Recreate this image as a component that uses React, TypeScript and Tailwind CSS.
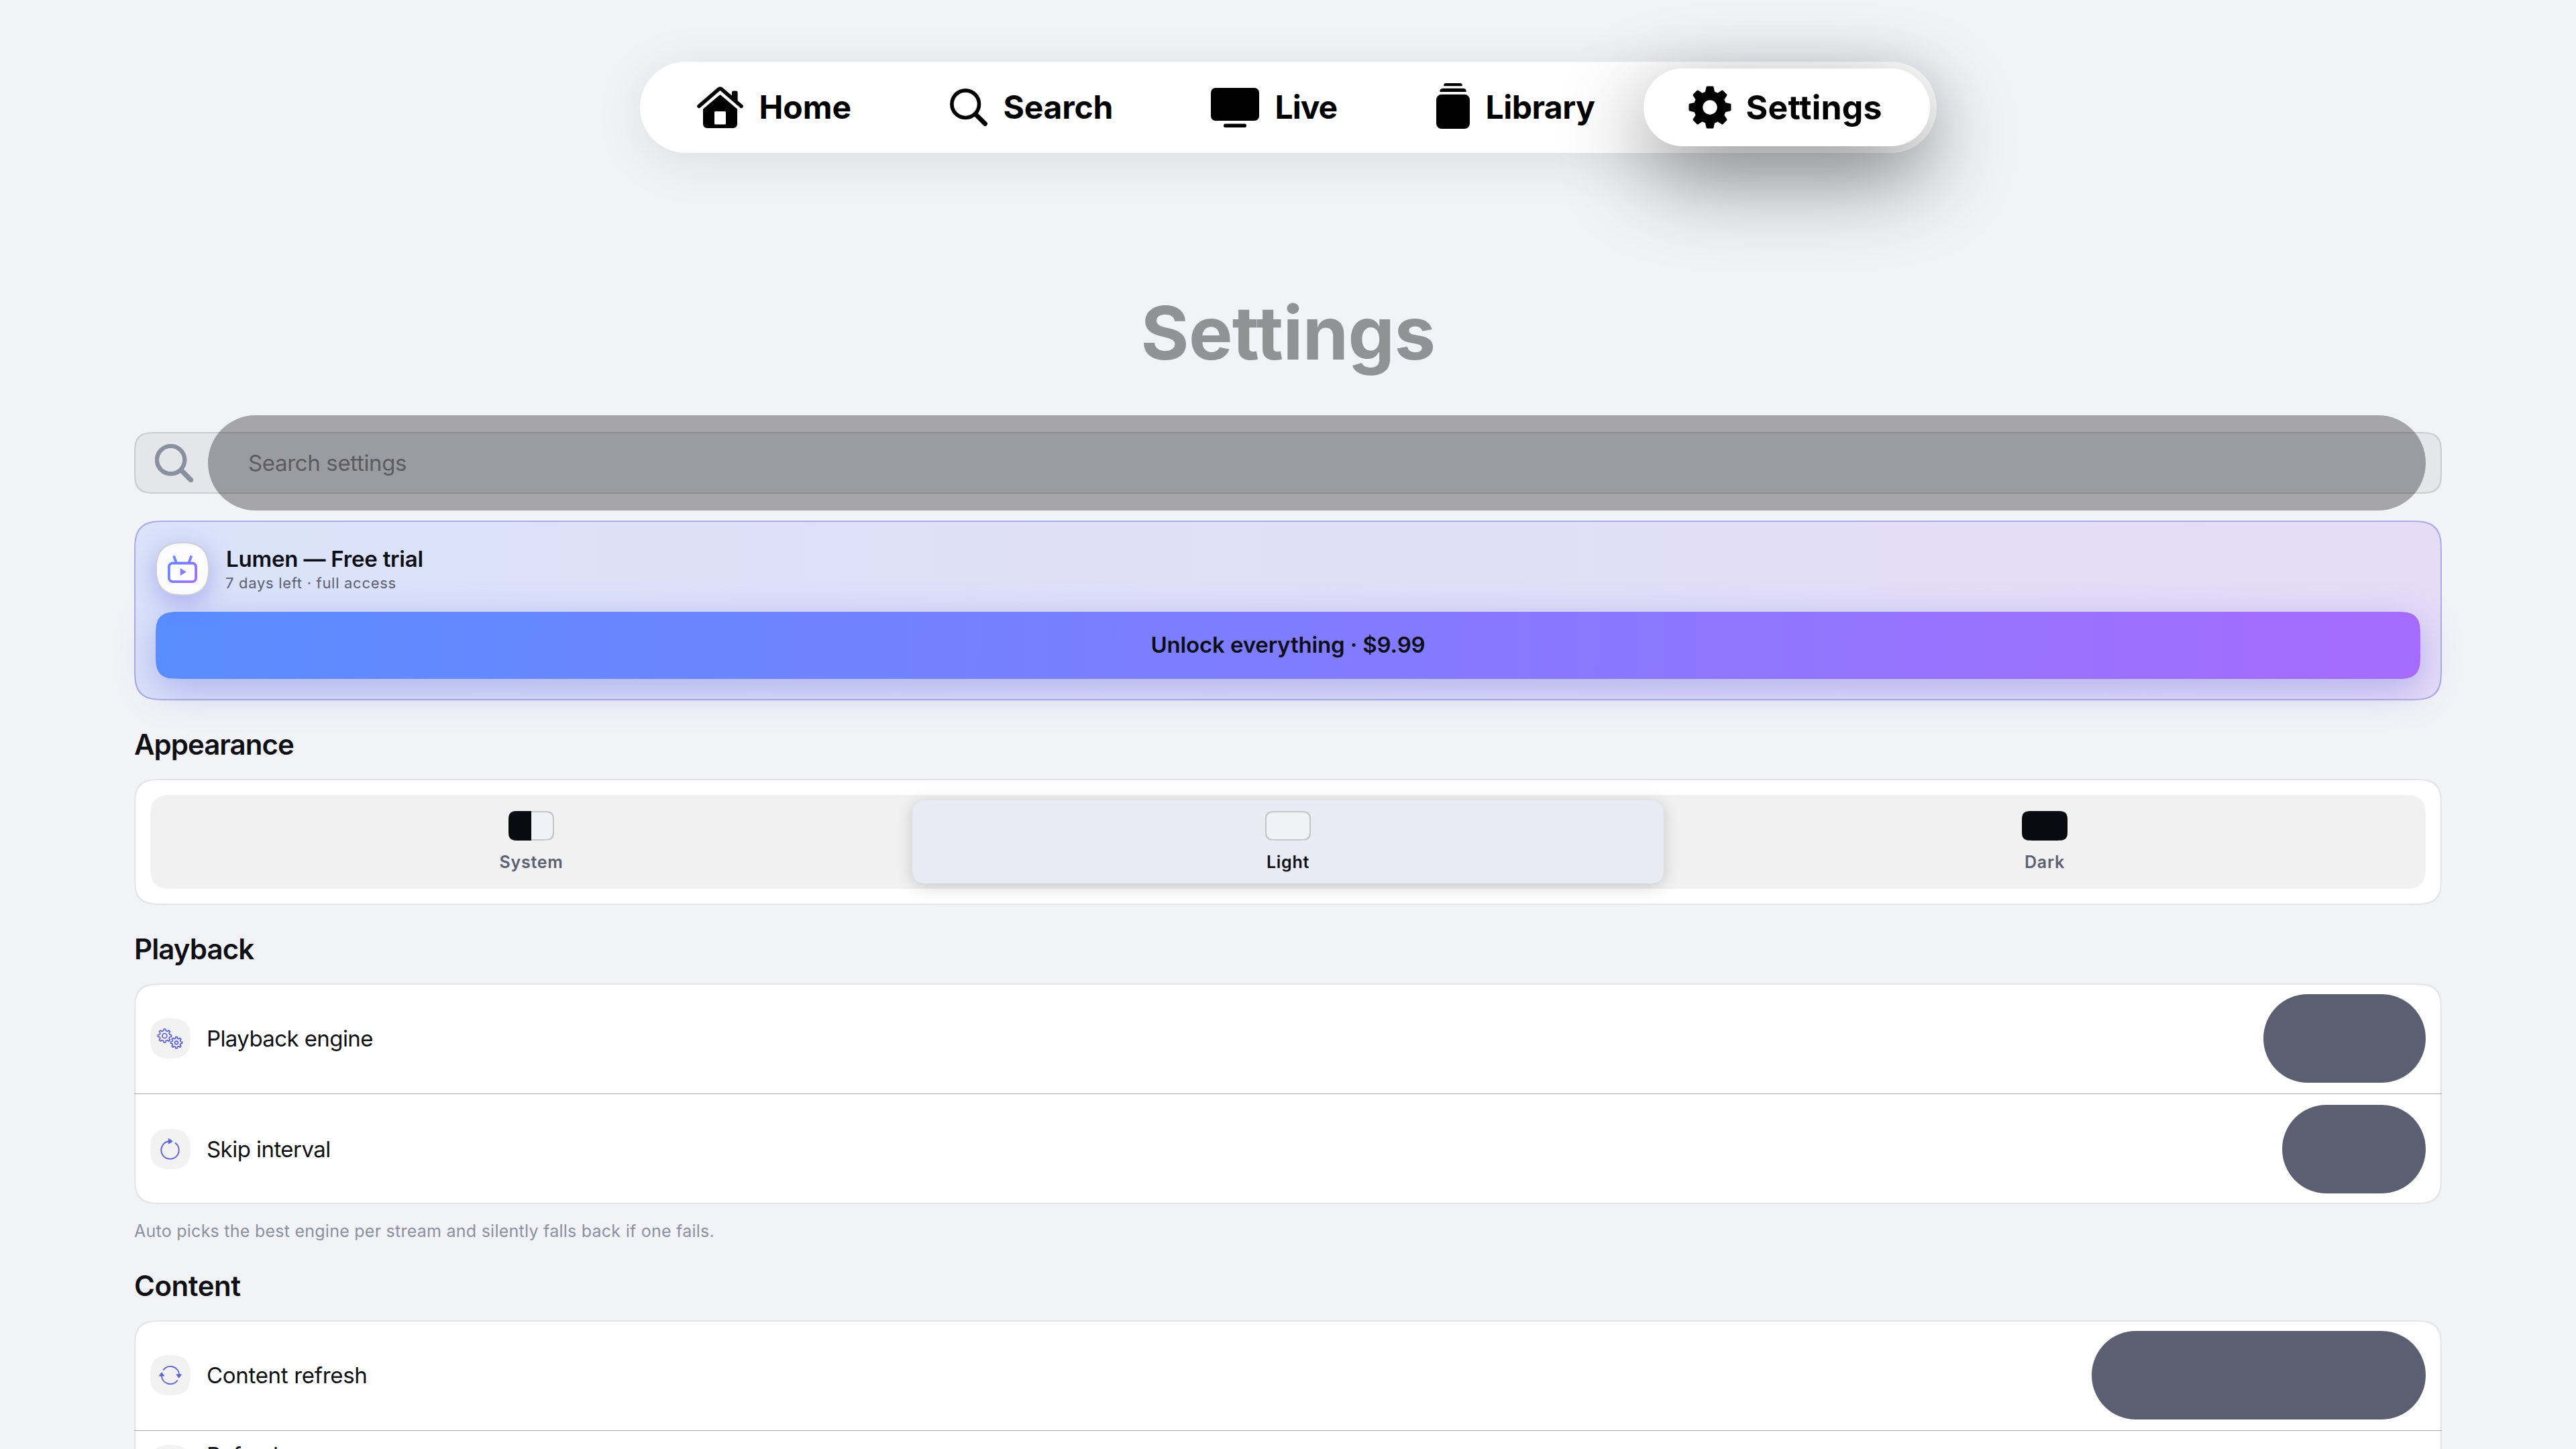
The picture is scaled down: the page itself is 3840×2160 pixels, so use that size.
import type { ReactNode } from "react";

type NavItem = {
  label: string;
  icon: ReactNode;
  width: string;
  text: string;
};

const ACCENT = "#5c62d6";

function polar(cx: number, cy: number, r: number, deg: number) {
  const a = (deg * Math.PI) / 180;
  return `${(cx + r * Math.sin(a)).toFixed(2)} ${(cy - r * Math.cos(a)).toFixed(2)}`;
}

// Closed outline of a cog with flat-topped teeth
function cogPath(cx: number, cy: number, outer: number, inner: number, teeth: number) {
  const step = 360 / teeth;
  const points: string[] = [];
  for (let i = 0; i < teeth; i++) {
    const a = i * step;
    points.push(
      polar(cx, cy, inner, a - step * 0.29),
      polar(cx, cy, outer, a - step * 0.18),
      polar(cx, cy, outer, a + step * 0.18),
      polar(cx, cy, inner, a + step * 0.29)
    );
  }
  return `M${points.join("L")}Z`;
}

function HomeIcon() {
  return (
    <svg width="69" height="62" viewBox="0 0 69 62" className="shrink-0">
      <path d="M3 29.3 32.2 4.2a3.6 3.6 0 0 1 4.6 0L66 29.3" fill="none" stroke="#000" strokeWidth="5.6" strokeLinecap="round" />
      <path d="M52 8.5a2 2 0 0 1 2-2h4.6a2 2 0 0 1 2 2V24L52 17Z" />
      <path
        fillRule="evenodd"
        d="M33.2 13a2 2 0 0 1 2.6 0L60 33.5V56a6 6 0 0 1-6 6H15a6 6 0 0 1-6-6V33.5ZM27.5 37a1.5 1.5 0 0 0-1.5 1.5V55a1.5 1.5 0 0 0 1.5 1.5h14A1.5 1.5 0 0 0 43 55V38.5a1.5 1.5 0 0 0-1.5-1.5Z"
      />
    </svg>
  );
}

function SearchIcon({ size, color, stroke }: { size: number; color: string; stroke: number }) {
  return (
    <svg width={size} height={size} viewBox="0 0 56 56" fill="none" stroke={color} strokeLinecap="round" className="shrink-0">
      <circle cx="23.2" cy="23.2" r="20.3" strokeWidth={stroke} />
      <path d="M39.5 39.5 52.5 52.5" strokeWidth={stroke + 1.2} />
    </svg>
  );
}

function LiveIcon() {
  return (
    <svg width="72" height="59" viewBox="0 0 72 59" className="shrink-0">
      <rect width="72" height="49" rx="7" />
      <rect x="19" y="53.5" width="34" height="5.5" rx="2.5" />
    </svg>
  );
}

function LibraryIcon() {
  return (
    <svg width="50" height="68" viewBox="0 0 50 68" className="mb-1 shrink-0">
      <path d="M14.5 0h21a3 3 0 0 1 3 4.3h-27a3 3 0 0 1 3-4.3Z" />
      <path d="M9.5 7.8h31a4 4 0 0 1 4 5.2h-39a4 4 0 0 1 4-5.2Z" />
      <rect y="16.8" width="50" height="51.2" rx="8" />
    </svg>
  );
}

function GearIcon() {
  return (
    <svg width="64" height="64" viewBox="0 0 64 64" className="shrink-0">
      <circle cx="32" cy="32" r="17.5" fill="none" stroke="#000" strokeWidth="13.5" />
      {[0, 45, 90, 135, 180, 225, 270, 315].map((deg) => (
        <path
          key={deg}
          d="M28.2 2.2h7.6L38 12h-12Z"
          stroke="#000"
          strokeWidth="3.4"
          strokeLinejoin="round"
          transform={`rotate(${deg} 32 32)`}
        />
      ))}
    </svg>
  );
}

function TvIcon() {
  return (
    <svg width="44" height="41" viewBox="0 0 44 41" fill="none">
      <defs>
        <linearGradient id="tv" x1="0" y1="0" x2="44" y2="41" gradientUnits="userSpaceOnUse">
          <stop stopColor="#5b8dff" />
          <stop offset="1" stopColor="#a56bff" />
        </linearGradient>
      </defs>
      <g stroke="url(#tv)" strokeWidth="3.8" strokeLinecap="round">
        <rect x="1.9" y="11.5" width="40.2" height="27.6" rx="5.5" />
        <path d="M9.5 2 12.8 11M34.8 2 31.5 11" />
      </g>
      <path d="M18.7 20v9.2a.6.6 0 0 0 .9.5l7.3-4.6a.6.6 0 0 0 0-1l-7.3-4.6a.6.6 0 0 0-.9.5Z" fill="url(#tv)" />
    </svg>
  );
}

function EngineIcon() {
  return (
    <svg width="60" height="60" viewBox="0 0 60 60" fill="none" stroke={ACCENT} strokeWidth="1.7" strokeLinejoin="round">
      <path d={cogPath(21.4, 26, 10.1, 7.7, 8)} />
      <circle cx="21.4" cy="26" r="3.5" />
      <path d={cogPath(39, 36.2, 8.6, 6.5, 8)} />
      <circle cx="39" cy="36.2" r="2.4" />
    </svg>
  );
}

function SkipIcon() {
  return (
    <svg width="60" height="60" viewBox="0 0 60 60" fill="none" stroke={ACCENT} strokeWidth="1.9" strokeLinecap="round">
      <path d="M28 18.3A13.2 13.2 0 1 0 37.5 20.9" />
      <path d="M27.3 14.8v7.2L33 18.6Z" fill={ACCENT} strokeWidth="1" strokeLinejoin="round" />
    </svg>
  );
}

function RefreshIcon() {
  return (
    <svg width="60" height="60" viewBox="0 0 60 60" fill="none" stroke={ACCENT} strokeWidth="1.9" strokeLinecap="round">
      <path d="M19.7 21.8A13.2 13.2 0 0 1 43.2 29.5M40.3 38.2A13.2 13.2 0 0 1 16.8 30.5" />
      <path d="M39.3 28.9h7l-3.5 4.9ZM13.7 31.1h7l-3.5-4.9Z" fill={ACCENT} strokeWidth="1" strokeLinejoin="round" />
    </svg>
  );
}

const NAV: NavItem[] = [
  { label: "Home", icon: <HomeIcon />, width: "w-[377px]", text: "" },
  { label: "Search", icon: <SearchIcon size={56} color="#000" stroke={5.6} />, width: "w-[389px]", text: "tracking-[-0.2px]" },
  { label: "Live", icon: <LiveIcon />, width: "w-[336px]", text: "tracking-[-1px]" },
  { label: "Library", icon: <LibraryIcon />, width: "w-[309px]", text: "tracking-[-0.5px]" }
];

function NavBar() {
  return (
    <nav className="mx-auto mt-[92px] flex h-[136px] w-[1933px] shrink-0 items-center rounded-full bg-white pl-[85px] text-[48px] font-bold text-black shadow-[0_12px_80px_rgba(0,0,0,0.09)]">
      {NAV.map((item) => (
        <div key={item.label} className={`flex shrink-0 items-center gap-6 ${item.width}`}>
          {item.icon}
          <span className={item.text}>{item.label}</span>
        </div>
      ))}
      <div className="flex h-[116px] w-[427px] shrink-0 items-center gap-[22px] rounded-full bg-white pl-[67px] shadow-[0_44px_130px_rgba(0,0,0,0.47)]">
        <GearIcon />
        <span className="text-[50px] tracking-[0.2px]">Settings</span>
      </div>
    </nav>
  );
}

function SearchBar() {
  return (
    <div className="mt-[88px] flex h-[92px] items-center justify-between rounded-[34px] border-2 border-[#cccccf] bg-[#e5e6ea] pr-[22px] pl-[29px] [corner-shape:superellipse(1.7)]">
      <SearchIcon size={57} color="#8b90a0" stroke={6.2} />
      <div className="flex h-[142px] w-[3306px] shrink-0 items-center rounded-full bg-[#1e1e23]/37 pt-px pl-[60px] text-[33px] tracking-[-0.35px] text-[#5b5c5f]">
        Search settings
      </div>
    </div>
  );
}

function TrialCard() {
  return (
    <section className="mt-10 h-[268px] rounded-[49px] border-2 border-[#aaabe7] bg-linear-to-r from-[#dae3f9] to-[#e6dcf7] bg-origin-border px-[30px] pt-[30px] [corner-shape:superellipse(1.7)]">
      <div className="flex items-center gap-6">
        <div className="flex size-20 items-center justify-center rounded-[40px] border-2 border-[#cfcfd5] bg-[#fcfcff] shadow-[0_10px_36px_rgba(92,98,225,0.4)] [corner-shape:superellipse(1.35)]">
          <TvIcon />
        </div>
        <div className="flex flex-col gap-0.5">
          <h2 className="pl-px text-[33px] leading-[40px] font-semibold tracking-[-0.2px] text-[#0d0f18]">Lumen — Free trial</h2>
          <p className="text-[22px] leading-[28px] tracking-[0.7px] text-[#5b5f71]">7 days left · full access</p>
        </div>
      </div>
      <button className="mt-6 flex h-[100px] w-full items-center justify-center rounded-[37px] bg-linear-[92deg] from-[#598dff] to-[#a66bff] text-[33px] font-semibold tracking-[-0.15px] text-[#0d0f18] shadow-[0_16px_56px_rgba(92,98,225,0.36)] [corner-shape:superellipse(1.7)]">
        Unlock everything · $9.99
      </button>
    </section>
  );
}

function SectionTitle({ children, className }: { children: ReactNode; className: string }) {
  return <h2 className={`mt-9 mb-[21px] text-[42px] leading-[60px] font-semibold text-[#0f1015] ${className}`}>{children}</h2>;
}

function Card({ children, className = "" }: { children: ReactNode; className?: string }) {
  return (
    <section className={`rounded-[42px] bg-white shadow-[inset_0_0_0_2px_#e5e5e7] [corner-shape:superellipse(1.7)] ${className}`}>
      {children}
    </section>
  );
}

function Swatch({ mode }: { mode: "system" | "light" | "dark" }) {
  if (mode === "dark") {
    return <div className="h-11 w-[68px] rounded-[15px] bg-[#090b10] [corner-shape:superellipse(1.7)]" />;
  }
  return (
    <div className="h-11 w-[68px] overflow-hidden rounded-[15px] bg-[#f1f2f6] shadow-[inset_0_0_0_2px_#c5c5ca] [corner-shape:superellipse(1.7)]">
      {mode === "system" && <div className="h-full w-1/2 bg-[#090b10]" />}
    </div>
  );
}

function Segment({ label, mode, active = false }: { label: string; mode: "system" | "light" | "dark"; active?: boolean }) {
  return (
    <div
      className={`flex flex-1 flex-col items-center gap-4 rounded-[26px] pt-4 [corner-shape:superellipse(1.7)] ${
        active ? "bg-[#e8ebf4] text-[#0f1015] shadow-[0_4px_24px_rgba(0,0,0,0.18)]" : "text-[#5b5f71]"
      }`}
    >
      <Swatch mode={mode} />
      <span className="text-[25px] leading-8 font-semibold tracking-[0.7px]">{label}</span>
    </div>
  );
}

function Row({ icon, label, text, pill }: { icon: ReactNode; label: string; text: string; pill: string }) {
  return (
    <div className="flex h-[164px] items-center px-6">
      <div className="size-[60px] rounded-[30px] bg-[#f2f2f3] [corner-shape:superellipse(1.4)]">{icon}</div>
      <span className={`ml-6 pt-px text-[33px] text-[#0f1015] ${text}`}>{label}</span>
      <div className={`ml-auto h-[132px] rounded-full bg-[#5b5f71] ${pill}`} />
    </div>
  );
}

function Divider() {
  return <div className="h-px bg-[#a9a9ab]" />;
}

export default function App() {
  return (
    <div className="flex h-[2160px] w-[3840px] flex-col overflow-hidden bg-[#f2f3f7] font-[Inter,sans-serif]">
      <NavBar />
      <main className="mx-auto w-[3440px]">
        <h1 className="mt-[208px] text-center text-[110px] leading-[120px] font-bold tracking-[-0.57px] text-[#919294]">Settings</h1>
        <SearchBar />
        <TrialCard />

        <SectionTitle className="tracking-[-1px]">Appearance</SectionTitle>
        <Card className="p-6">
          <div className="flex h-[140px] gap-2 rounded-[37px] bg-[#f1f1f1] p-2 [corner-shape:superellipse(1.7)]">
            <Segment label="System" mode="system" />
            <Segment label="Light" mode="light" active />
            <Segment label="Dark" mode="dark" />
          </div>
        </Card>

        <SectionTitle className="tracking-[-0.9px]">Playback</SectionTitle>
        <Card>
          <Row icon={<EngineIcon />} label="Playback engine" text="tracking-[-0.6px]" pill="w-[242px]" />
          <Divider />
          <Row icon={<SkipIcon />} label="Skip interval" text="tracking-[-0.55px]" pill="w-[214px]" />
        </Card>
        <p className="mt-6 text-[25px] leading-8 tracking-[0.25px] text-[#8b90a0]">
          Auto picks the best engine per stream and silently falls back if one fails.
        </p>

        <SectionTitle className="tracking-[-0.5px]">Content</SectionTitle>
        <Card>
          <Row icon={<RefreshIcon />} label="Content refresh" text="tracking-[-0.3px]" pill="w-[498px]" />
          <Divider />
          <div className="flex h-[164px] items-start px-6">
            <div className="mt-[21px] size-[60px] rounded-[30px] bg-[#f2f2f3] [corner-shape:superellipse(1.4)]" />
            <span className="mt-4 ml-6 text-[33px] leading-[40px] tracking-[-0.3px] text-[#0f1015]">Refresh</span>
          </div>
        </Card>
      </main>
    </div>
  );
}
